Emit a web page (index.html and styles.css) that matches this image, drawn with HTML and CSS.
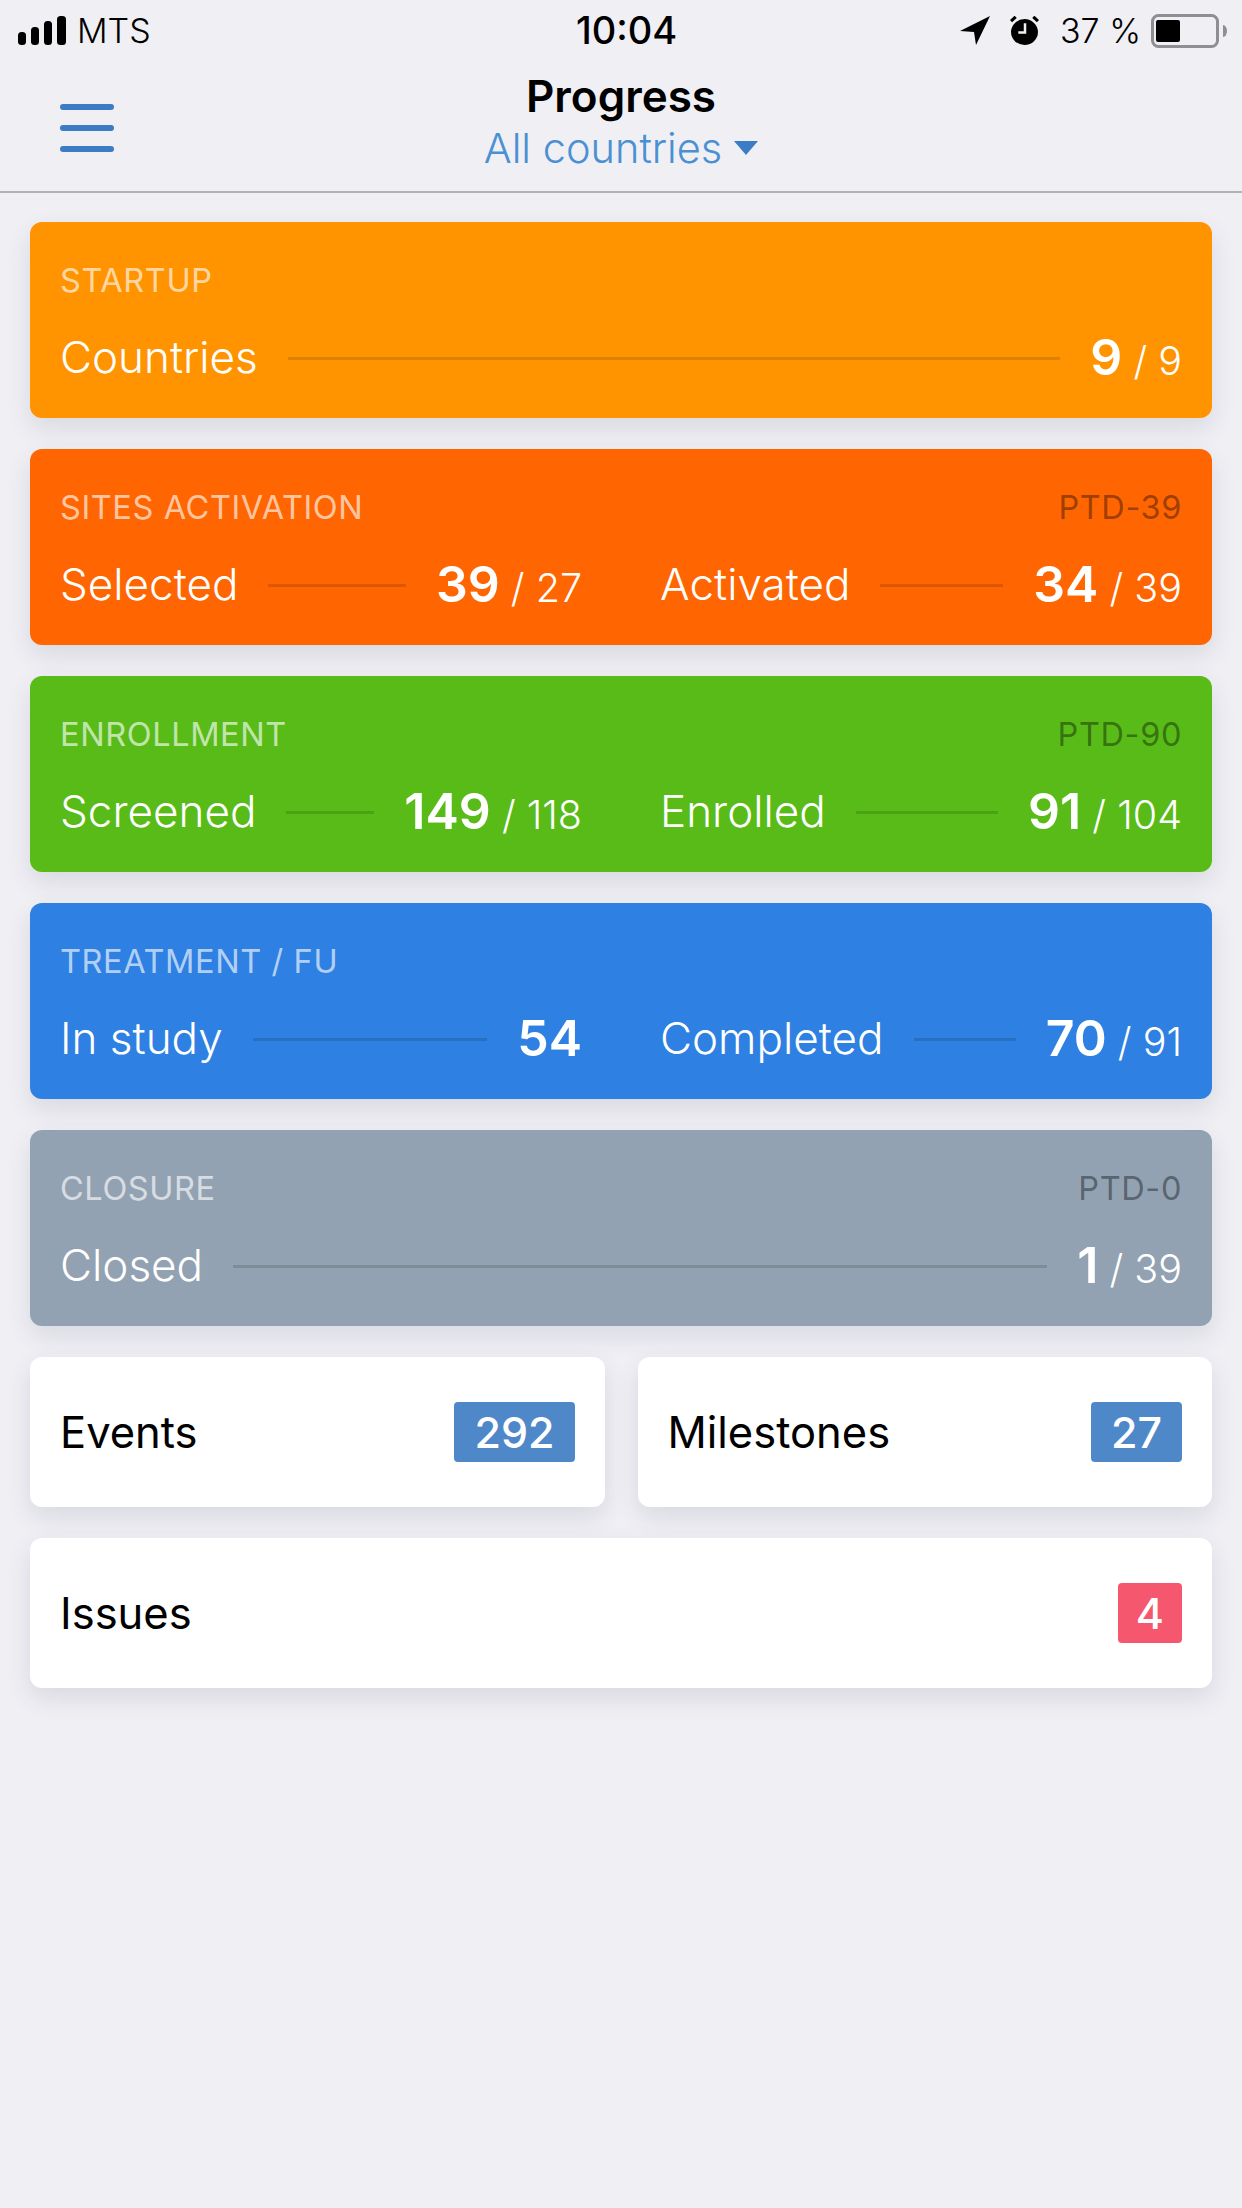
FILE: index.html
```html
<!DOCTYPE html>
<html lang="en">
<head>
<meta charset="utf-8">
<title>Progress</title>
<link rel="stylesheet" href="styles.css">
</head>
<body>
<div class="app">
  <div class="status">
    <div class="status-left">
      <svg class="signal" width="48" height="30" viewBox="0 0 48 30"><rect x="0" y="16" width="8" height="13" rx="3.5"/><rect x="13" y="11" width="8" height="18" rx="3.5"/><rect x="26" y="5" width="8" height="24" rx="3.5"/><rect x="39" y="0" width="9" height="29" rx="3.5"/></svg>
      <span>MTS</span>
    </div>
    <div class="status-time">10:04</div>
    <div class="status-right">
      <svg class="loc" width="30" height="29" viewBox="0 0 30 29"><path d="M30 0 L0 15 L14 16 L16 29 Z"/></svg>
      <svg class="alarm" width="29" height="29" viewBox="0 0 28 28"><ellipse cx="14" cy="15.5" rx="13" ry="12.5"/><path d="M1 5 L5.5 0.8 M22.5 0.8 L27 5" stroke="#000" stroke-width="3" fill="none"/><path d="M14.5 7 V16 H8" stroke="#efeff4" stroke-width="2.4" fill="none"/></svg>
      <span class="pct">37 %</span>
      <svg class="battery" width="76" height="34" viewBox="0 0 76 34"><rect x="1.5" y="1.5" width="65" height="31" rx="6" fill="none" stroke="#8e8e93" stroke-width="3"/><rect x="5" y="6" width="24" height="22" rx="2"/><path d="M72 11 a4 6 0 0 1 0 12 Z" fill="#8e8e93"/></svg>
    </div>
  </div>
  <header class="nav">
    <div class="burger"><i></i><i></i><i></i></div>
    <div class="title">Progress</div>
    <div class="subtitle">All countries<span class="caret"></span></div>
  </header>
  <main class="content">
    <section class="card startup">
      <div class="card-head"><span class="card-label">STARTUP</span></div>
      <div class="card-row">
        <div class="metric"><span class="m-name">Countries</span><span class="m-line"></span><span class="m-val"><b>9</b> / 9</span></div>
      </div>
    </section>
    <section class="card sites">
      <div class="card-head"><span class="card-label">SITES ACTIVATION</span><span class="ptd">PTD-39</span></div>
      <div class="card-row">
        <div class="metric"><span class="m-name">Selected</span><span class="m-line"></span><span class="m-val"><b>39</b> / 27</span></div>
        <div class="metric"><span class="m-name">Activated</span><span class="m-line"></span><span class="m-val"><b>34</b> / 39</span></div>
      </div>
    </section>
    <section class="card enroll">
      <div class="card-head"><span class="card-label">ENROLLMENT</span><span class="ptd">PTD-90</span></div>
      <div class="card-row">
        <div class="metric"><span class="m-name">Screened</span><span class="m-line"></span><span class="m-val"><b>149</b> / 118</span></div>
        <div class="metric"><span class="m-name">Enrolled</span><span class="m-line"></span><span class="m-val"><b>91</b> / 104</span></div>
      </div>
    </section>
    <section class="card treat">
      <div class="card-head"><span class="card-label">TREATMENT / FU</span></div>
      <div class="card-row">
        <div class="metric"><span class="m-name">In study</span><span class="m-line"></span><span class="m-val"><b>54</b></span></div>
        <div class="metric"><span class="m-name">Completed</span><span class="m-line"></span><span class="m-val"><b>70</b> / 91</span></div>
      </div>
    </section>
    <section class="card closure">
      <div class="card-head"><span class="card-label">CLOSURE</span><span class="ptd">PTD-0</span></div>
      <div class="card-row">
        <div class="metric"><span class="m-name">Closed</span><span class="m-line"></span><span class="m-val"><b>1</b> / 39</span></div>
      </div>
    </section>
    <div class="tiles">
      <div class="tile"><span>Events</span><span class="badge">292</span></div>
      <div class="tile"><span>Milestones</span><span class="badge">27</span></div>
    </div>
    <div class="tile"><span>Issues</span><span class="badge red">4</span></div>
  </main>
</div>
</body>
</html>
```
FILE: styles.css
```css
* { box-sizing: border-box; }
html, body { margin: 0; padding: 0; }
body { background: #efeff4; font-family: Inter, "Noto Sans", sans-serif; color: #000; }
.app { width: 1242px; min-height: 2208px; display: flex; flex-direction: column; }

.status { height: 60px; padding: 1px 15px 0 18px; display: flex; align-items: center; justify-content: space-between; position: relative; font-size: 34px; }
.status-left { display: flex; align-items: center; gap: 11px; font-weight: 300; }
.status-time { font-weight: 500; font-size: 38px; position: absolute; left: 576px; top: 7px; }
.status-right { display: flex; align-items: center; font-weight: 300; }
.loc { margin-right: 20px; }
.alarm { margin-right: 21px; }
.pct { margin-right: 10px; }

.nav { height: 133px; border-bottom: 2px solid #b2b2b6; display: flex; flex-direction: column; align-items: center; position: relative; padding-top: 10px; }
.burger { position: absolute; left: 60px; top: 44px; width: 54px; display: flex; flex-direction: column; gap: 15px; }
.burger i { display: block; height: 6px; border-radius: 3px; background: #3b7cc4; }
.title { font-size: 44px; font-weight: 600; line-height: 52px; }
.subtitle { font-size: 41.5px; font-weight: 300; line-height: 52px; color: #4a90d2; display: flex; align-items: center; }
.caret { width: 0; height: 0; border-left: 12px solid transparent; border-right: 12px solid transparent; border-top: 14px solid #3b7cc4; margin-left: 12px; }

.content { padding: 29px 30px 0; display: flex; flex-direction: column; gap: 31px; }
.card { height: 196px; border-radius: 12px; padding: 39px 30px 0; color: #fff; box-shadow: 0 10px 24px rgba(60,60,90,.12); display: flex; flex-direction: column; }
.startup { background: #ff9300; }
.sites { background: #ff6500; }
.enroll { background: #58bb18; }
.treat { background: #2e80e2; }
.closure { background: #92a2b2; }

.card-head { display: flex; justify-content: space-between; height: 40px; line-height: 40px; font-size: 32.5px; letter-spacing: .6px; }
.card-label { color: rgba(255,255,255,.65); font-weight: 400; }
.ptd { color: rgba(0,0,0,.4); }
.card-row { display: flex; gap: 78px; margin-top: 26px; }
.metric { flex: 1 1 0; display: flex; align-items: center; height: 60px; min-width: 0; }
.m-name { font-size: 44px; font-weight: 300; white-space: nowrap; }
.m-line { flex: 1; height: 3px; margin: 2px 30px 0; background: rgba(0,0,0,.13); }
.m-val { font-size: 39.5px; font-weight: 300; white-space: nowrap; }
.m-val b { font-size: 50px; font-weight: 600; }

.tiles { display: flex; gap: 33px; }
.tiles .tile { flex: 1 1 0; }
.tile { height: 150px; background: #fff; border-radius: 12px; padding: 0 30px; display: flex; align-items: center; justify-content: space-between; font-size: 43.5px; font-weight: 400; box-shadow: 0 10px 24px rgba(60,60,90,.12); }
.badge { height: 60px; line-height: 60px; padding: 0 20px; border-radius: 4px; background: #4f88c8; color: #fff; font-weight: 500; font-size: 43px; }
.badge.red { background: #f5586e; padding: 0 18px; }
```
